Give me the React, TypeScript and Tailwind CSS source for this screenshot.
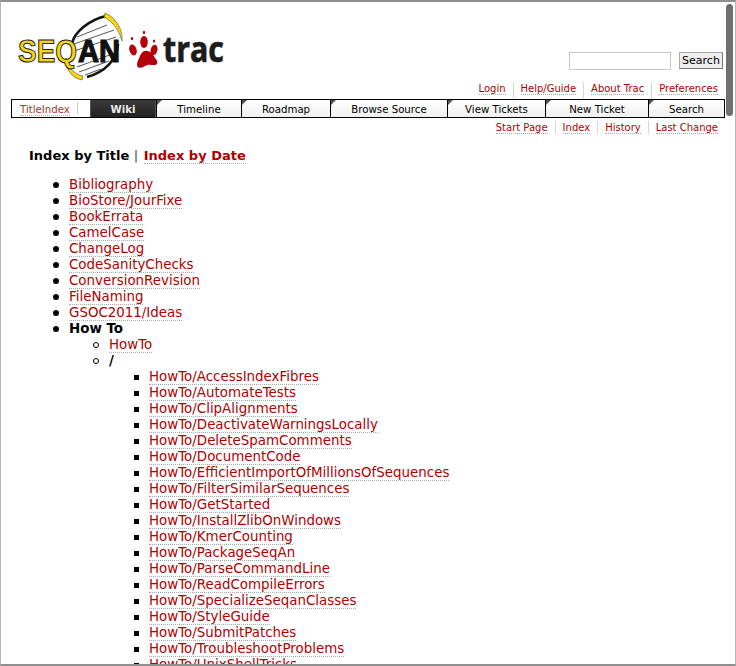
const font = { fontFamily: '"DejaVu Sans", Verdana, sans-serif' };

const top = ["Bibliography","BioStore/JourFixe","BookErrata","CamelCase","ChangeLog","CodeSanityChecks","ConversionRevision","FileNaming","GSOC2011/Ideas"];
const howto = ["AccessIndexFibres","AutomateTests","ClipAlignments","DeactivateWarningsLocally","DeleteSpamComments","DocumentCode","EfficientImportOfMillionsOfSequences","FilterSimilarSequences","GetStarted","InstallZlibOnWindows","KmerCounting","PackageSeqAn","ParseCommandLine","ReadCompileErrors","SpecializeSeqanClasses","StyleGuide","SubmitPatches","TroubleshootProblems","UnixShellTricks"];

const nav: [string, string][] = [["Timeline","w-[85px]"],["Roadmap","w-[89px]"],["Browse Source","w-[117px]"],["View Tickets","w-[98px]"],["New Ticket","w-[103px]"],["Search","flex-1"]];

const disc = "relative before:absolute before:left-[-16px] before:top-[5px] before:h-[6px] before:w-[6px] before:rounded-full before:bg-black";
const circle = "relative before:absolute before:left-[-16px] before:top-[5px] before:h-[6px] before:w-[6px] before:rounded-full before:border before:border-black";
const square = "relative before:absolute before:left-[-15px] before:top-[6px] before:h-[5px] before:w-[5px] before:bg-black";

function A({ children, className = "" }: { children: React.ReactNode; className?: string }) {
  return <a className={"text-[#b00000] border-b border-dotted border-[#aaa] " + className}>{children}</a>;
}

function MetaNav({ items, className = "" }: { items: string[]; className?: string }) {
  return (
    <div className={"flex justify-end leading-[13px] pr-[17px] " + className}>
      {items.map((t, i) => (
        <span key={t} className={i ? "ml-[7px] pl-[7px] border-l border-[#d7d7d7]" : ""}>
          <A>{t}</A>
        </span>
      ))}
    </div>
  );
}

function Logo() {
  return (
    <svg width="212" height="70" viewBox="0 0 212 70" className="block overflow-visible">
      <g stroke="#555" strokeWidth="1" fill="none">
        <path d="M60 25 L90 13" /><path d="M57 32 L97 18" /><path d="M57 39 L99 25" /><path d="M60 55 L98 41" /><path d="M62 60 L92 49" /><path d="M68 63 L84 57" />
      </g>
      <path d="M55 32 C57 20 72 8 89 4" stroke="#141414" strokeWidth="2.6" fill="none" />
      <path d="M101 32 C100 48 88 60 70 65" stroke="#141414" strokeWidth="2.6" fill="none" />
      <path d="M88 1 C98 5 106 16 105 29 C102 18 96 10 87 5 Z" fill="#f6d60c" stroke="#333" strokeWidth="0.5" />
      <path d="M49 46 C51 56 57 62 66 64 L65 68 C54 66 48 56 49 46Z" fill="#f6d60c" stroke="#333" strokeWidth="0.5" />
      <text x="1" y="50" fontFamily="Liberation Sans" fontWeight="700" fontSize="31" fill="#f6d60c" stroke="#222" strokeWidth="1" textLength="59" lengthAdjust="spacingAndGlyphs">SEQ</text>
      <text x="61" y="50" fontFamily="Liberation Sans" fontWeight="700" fontSize="31" fill="#111" stroke="#111" strokeWidth="1.2" textLength="42" lengthAdjust="spacingAndGlyphs">AN</text>
      <g fill="#b3000c">
        <path d="M128 39 C133 38 136 43 138 46 C141 49 141 53 138 53 C134 53 131 52 128 54 C125 56 120 57 120 53 C120 49 122 47 123 44 C124 41 126 39 128 39Z" />
        <ellipse cx="116" cy="38" rx="3.6" ry="5.6" transform="rotate(-18 116 38)" />
        <ellipse cx="127" cy="30" rx="3.8" ry="6" />
        <ellipse cx="137" cy="38" rx="3.4" ry="5.4" transform="rotate(14 137 38)" />
        <ellipse cx="115" cy="26.5" rx="1.2" ry="1.6" /><ellipse cx="127" cy="20.5" rx="1.2" ry="1.8" /><ellipse cx="137" cy="29" rx="1.1" ry="1.5" />
      </g>
      <text x="146" y="50" fontFamily="Open Sans" fontWeight="700" fontSize="35" fill="#1c1c1c" stroke="#1c1c1c" strokeWidth="0.7" textLength="61" lengthAdjust="spacingAndGlyphs">trac</text>
    </svg>
  );
}

export default function App() {
  return (
    <div style={font} className="relative h-[666px] w-[736px] overflow-hidden bg-white text-black border-t-2 border-l border-r border-b-2 border-[#8f8f8f] border-l-[#b5b5b5] border-r-[#b5b5b5]">
      <div className="absolute right-[2px] top-[2px] h-[112px] w-[7px] rounded-full bg-[#6f6f6f]" />

      <div className="flex justify-between pl-[16px] pt-[10px] h-[78px]">
        <Logo />
        <div className="flex items-start pt-[40px] pr-[12px]">
          <div className="w-[102px] h-[18px] border border-[#c8c8c8] bg-white mr-[8px]" />
          <div className="h-[17px] w-[44px] border border-[#aaa] border-b-[#777] border-r-[#777] bg-[#eee] text-[11px] leading-[15px] text-center">Search</div>
        </div>
      </div>

      <MetaNav className="h-[19px] pt-[2px] text-[10px]" items={["Login","Help/Guide","About Trac","Preferences"]} />

      <div className="ml-[10px] mr-[10px] h-[19px] border border-black flex text-[10.2px] leading-[20px] text-center text-black">
        <div className="w-[78px] text-left pl-[8px] relative">
          <A className="text-[#b03030]">TitleIndex</A>
          <span className="absolute right-[12px] top-[2px] h-[12px] border-l border-[#ccc]" />
        </div>
        <div className="w-[66px] bg-[#2a2a2a] border-x border-[#555] font-bold text-[#eeeeee] bg-gradient-to-b from-[#3a3a3a] to-[#222]">Wiki</div>
        {nav.map(([t, w]) => (
          <div key={t} className={"relative border-l border-black bg-gradient-to-b from-white to-[#f0f0f0] " + w}>
            <span className="absolute left-0 top-0 w-0 h-0 border-t-[5px] border-r-[5px] border-t-[#555] border-r-transparent" />
            {t}
          </div>
        ))}
      </div>

      <MetaNav className="pt-[3px] text-[10px]" items={["Start Page","Index","History","Last Change"]} />

      <div className="pl-[28px] pt-[13px]">
        <h1 className="text-[13px] leading-[17px] font-bold">
          Index by Title <span className="text-[#446] font-normal">|</span> <A className="ml-px">Index by Date</A>
        </h1>
        <ul className="mt-[13px] pl-[40px] list-none text-[13.4px] leading-[16px]">
          {top.map((t) => <li key={t} className={disc}><A>{t}</A></li>)}
          <li className={disc}>
            <b>How To</b>
            <ul className="pl-[40px] list-none">
              <li className={circle}><A>HowTo</A></li>
              <li className={circle}>
                <b>/</b>
                <ul className="pl-[40px] list-none">
                  {howto.map((t) => <li key={t} className={square}><A>{"HowTo/" + t}</A></li>)}
                </ul>
              </li>
            </ul>
          </li>
        </ul>
      </div>
    </div>
  );
}
